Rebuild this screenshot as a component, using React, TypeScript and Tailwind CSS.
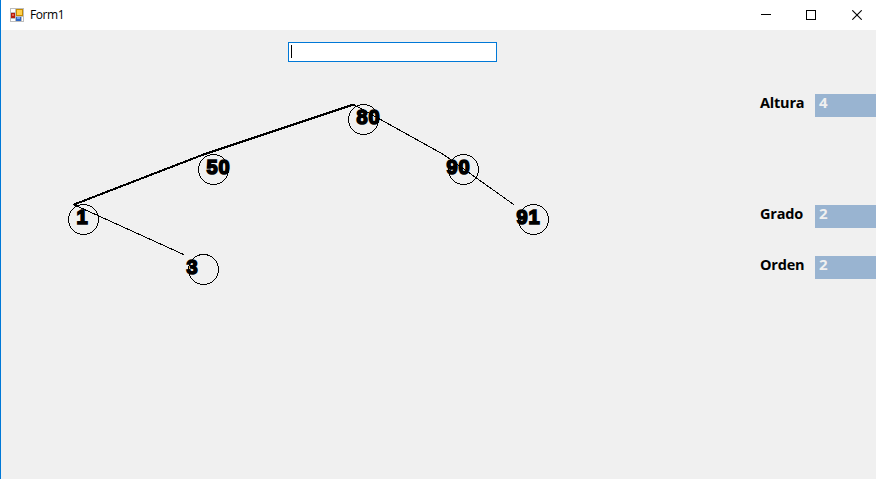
const nodes = [
  { value: '80', cx: 363.5, cy: 119.5, tx: 356.5 },
  { value: '50', cx: 213.5, cy: 169.5, tx: 206.5 },
  { value: '1', cx: 83.5, cy: 219.5, tx: 76.5 },
  { value: '3', cx: 203.5, cy: 269.5, tx: 186.5 },
  { value: '90', cx: 463.5, cy: 169.5, tx: 446.5 },
  { value: '91', cx: 533.5, cy: 219.5, tx: 516.5 },
];

function FormIcon() {
  return (
    <svg width="14" height="14" viewBox="0 0 14 14" shapeRendering="crispEdges">
      <rect width="14" height="14" fill="#bdbdbd" />
      <path d="M1 1h4v3H1zM1 11h4v2H1zM12 9h1v4h-1z" fill="#fff" />
      <rect x="1" y="5" width="4" height="5" fill="#b51c0c" />
      <rect x="2" y="6" width="2" height="2" fill="#e8604c" />
      <rect x="6" y="1" width="7" height="7" fill="#c58a00" />
      <rect x="7" y="2" width="5" height="5" fill="#ffd04a" />
      <rect x="6" y="9" width="5" height="4" fill="#2f66c4" />
      <rect x="7" y="9" width="3" height="2" fill="#75a5ee" />
    </svg>
  );
}

function TitleBar() {
  return (
    <header className="flex h-[30px] items-center bg-white pl-[9px] text-black">
      <FormIcon />
      <span className="ml-[6px] text-[12px] leading-4 tracking-[-0.45px]">Form1</span>
      <div className="mr-[14px] ml-auto flex items-center">
        <svg width="10" height="10" shapeRendering="crispEdges">
          <path d="M0 4.5H10" stroke="#000" />
        </svg>
        <svg className="ml-[35px]" width="10" height="10" shapeRendering="crispEdges">
          <rect x=".5" y=".5" width="9" height="9" fill="none" stroke="#000" />
        </svg>
        <svg className="ml-9" width="10" height="10">
          <path d="M.3 .3 9.7 9.7M9.7 .3 .3 9.7" stroke="#000" strokeWidth="1.1" />
        </svg>
      </div>
    </header>
  );
}

function Tree() {
  return (
    <svg className="block" width="759" height="417" viewBox="1 62 759 417">
      <g fill="none" stroke="#000" shapeRendering="crispEdges">
        <path d="M74 204.5 203.5 154.5 353.5 104.5" strokeWidth="2" />
        <path d="M353.5 104.5 443.5 154.5 514 204.8M73.5 204.5 184 254.7" />
        {nodes.map((n) => (
          <circle key={n.value} cx={n.cx} cy={n.cy} r="15" />
        ))}
      </g>
      <g
        className="font-['Liberation_Sans',Arial,sans-serif] text-[20px] font-bold"
        stroke="#000"
        strokeWidth="1.6"
        letterSpacing="1"
      >
        {nodes.map((n) => (
          <text key={n.value} x={n.tx} y={n.cy + 4.5}>
            {n.value}
          </text>
        ))}
      </g>
    </svg>
  );
}

function Stat({ label, value }: { label: string; value: string }) {
  return (
    <div className="flex h-[23px] font-bold">
      <span className="w-[55px] text-[14.5px] leading-[18px] tracking-[-0.2px] text-black">{label}</span>
      <span className="flex-1 bg-[#99b4d1] pl-1 text-[15px] leading-4 text-[#f0f0f0]">{value}</span>
    </div>
  );
}

export default function App() {
  return (
    <div className="flex h-[479px] w-[876px] flex-col overflow-hidden border-l border-[#0078d7] bg-[#f0f0f0] font-['Open_Sans','Noto_Sans',sans-serif]">
      <TitleBar />
      <main className="flex min-h-0 flex-1">
        <section className="w-[759px]">
          <div className="mt-3 ml-[287px] flex h-5 w-[209px] border border-[#0078d7] bg-white pt-[2px] pl-[2px]">
            <span className="h-[13px] w-px bg-black" />
          </div>
          <Tree />
        </section>
        <aside className="flex flex-1 flex-col pt-16">
          <Stat label="Altura" value="4" />
          <div className="mt-[88px] flex flex-col gap-7">
            <Stat label="Grado" value="2" />
            <Stat label="Orden" value="2" />
          </div>
        </aside>
      </main>
    </div>
  );
}
